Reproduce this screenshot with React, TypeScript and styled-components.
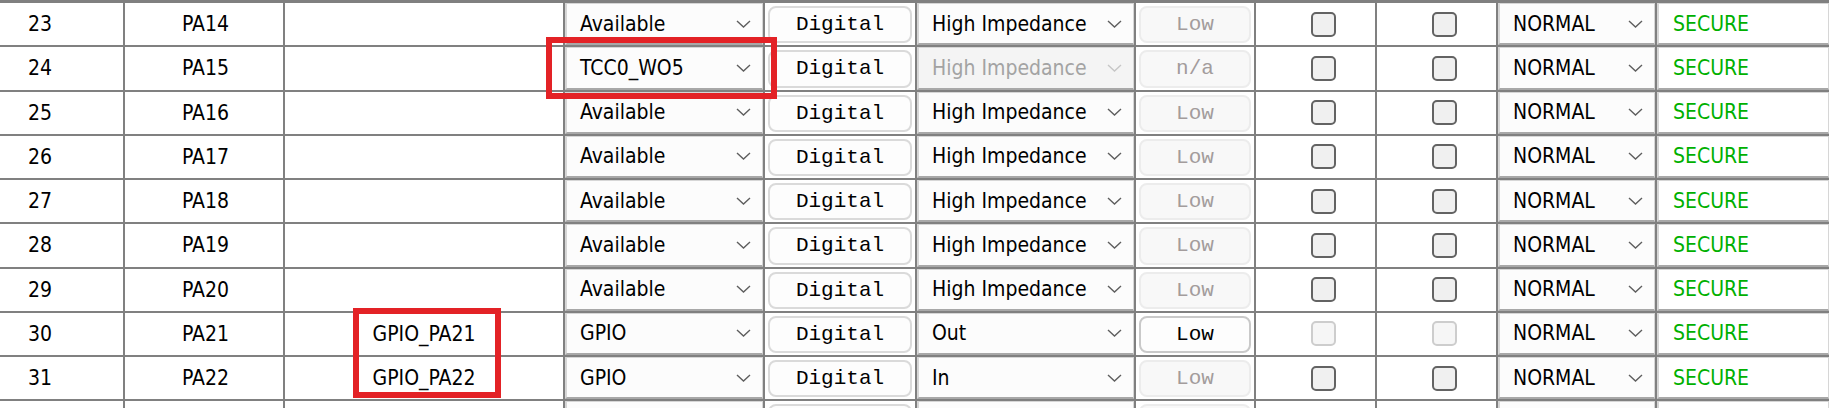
import React from 'react'
import styled, { createGlobalStyle } from 'styled-components'

const GlobalStyle = createGlobalStyle`
  html, body {
    margin: 0;
    padding: 0;
    background: #fff;
  }
  body {
    font-family: 'DejaVu Sans Condensed', 'DejaVu Sans', sans-serif;
    font-stretch: condensed;
    font-size: 21px;
    color: #000;
    overflow: hidden;
  }
`

// column widths include the 2px grid line on the right edge
const COLUMNS = [125, 160, 280, 200, 152, 219, 120, 121, 121, 159, 172]

const GRID = '#808080'

interface PinRow {
  index: number
  pin: string
  name?: string
  func: string
  direction: string
  directionDisabled?: boolean
  level: string
  levelEnabled?: boolean
  checksDisabled?: boolean
}

const pins: PinRow[] = [
  { index: 23, pin: 'PA14', func: 'Available', direction: 'High Impedance', level: 'Low' },
  {
    index: 24,
    pin: 'PA15',
    func: 'TCC0_WO5',
    direction: 'High Impedance',
    directionDisabled: true,
    level: 'n/a',
  },
  { index: 25, pin: 'PA16', func: 'Available', direction: 'High Impedance', level: 'Low' },
  { index: 26, pin: 'PA17', func: 'Available', direction: 'High Impedance', level: 'Low' },
  { index: 27, pin: 'PA18', func: 'Available', direction: 'High Impedance', level: 'Low' },
  { index: 28, pin: 'PA19', func: 'Available', direction: 'High Impedance', level: 'Low' },
  { index: 29, pin: 'PA20', func: 'Available', direction: 'High Impedance', level: 'Low' },
  {
    index: 30,
    pin: 'PA21',
    name: 'GPIO_PA21',
    func: 'GPIO',
    direction: 'Out',
    level: 'Low',
    levelEnabled: true,
    checksDisabled: true,
  },
  { index: 31, pin: 'PA22', name: 'GPIO_PA22', func: 'GPIO', direction: 'In', level: 'Low' },
]

const Sheet = styled.div`
  position: relative;
  width: 1836px;
  height: 408px;
  overflow: hidden;
`

const Table = styled.div`
  width: 1829px;
  border-top: 3px solid ${GRID};
`

const Row = styled.div`
  display: grid;
  grid-template-columns: ${COLUMNS.map((w) => `${w}px`).join(' ')};
  height: 44.25px;
  box-sizing: border-box;
  border-bottom: 2px solid ${GRID};
`

const Cell = styled.div<{ $pad?: number; $center?: boolean; $last?: boolean }>`
  display: flex;
  align-items: center;
  justify-content: ${(p) => (p.$center ? 'center' : 'flex-start')};
  padding-left: ${(p) => p.$pad ?? 0}px;
  border-right: ${(p) => (p.$last ? 'none' : `2px solid ${GRID}`)};
  box-sizing: border-box;
  min-width: 0;
  white-space: nowrap;
`

const FieldCell = styled.div<{ $last?: boolean }>`
  display: flex;
  border-right: ${(p) => (p.$last ? 'none' : `2px solid ${GRID}`)};
  box-sizing: border-box;
  min-width: 0;
`

const ButtonCell = styled.div`
  display: flex;
  padding: 3px 3px 2px 3px;
  border-right: 2px solid ${GRID};
  box-sizing: border-box;
  min-width: 0;
`

const Combo = styled.div<{ $disabled?: boolean }>`
  flex: 1;
  display: flex;
  align-items: center;
  justify-content: space-between;
  padding: 0 11px 0 13px;
  box-sizing: border-box;
  background: ${(p) => (p.$disabled ? '#f4f4f4' : '#fcfcfc')};
  border: 1px solid #d6d6d6;
  border-left-width: 2px;
  border-bottom: 2px solid #a8a8a8;
  color: ${(p) => (p.$disabled ? '#a3a3a3' : '#000')};
  white-space: nowrap;
`

const SecureField = styled(Combo)`
  background: #fff;
  padding-left: 14px;
  color: #00b000;
`

const PushButton = styled.div<{ $enabled?: boolean; $muted?: boolean }>`
  flex: 1;
  display: flex;
  align-items: center;
  justify-content: center;
  border-radius: 8px;
  border: 2px solid ${(p) => (p.$muted ? '#ececec' : p.$enabled ? '#c9c9c9' : '#dadada')};
  background: ${(p) => (p.$muted ? '#f8f8f8' : '#fdfdfd')};
  color: ${(p) => (p.$muted ? '#a39c9c' : '#000')};
  font-family: 'Liberation Mono', monospace;
  font-size: 21px;
`

const CheckBox = styled.div<{ $disabled?: boolean }>`
  width: 25px;
  height: 25px;
  box-sizing: border-box;
  border-radius: 5px;
  border: 2px solid ${(p) => (p.$disabled ? '#cdcdcd' : '#636363')};
  background: ${(p) => (p.$disabled ? '#f6f6f6' : '#f0f0f0')};
`

const Marker = styled.div<{ $x: number; $y: number; $w: number; $h: number }>`
  position: absolute;
  left: ${(p) => p.$x}px;
  top: ${(p) => p.$y}px;
  width: ${(p) => p.$w}px;
  height: ${(p) => p.$h}px;
  box-sizing: border-box;
  border: 6px solid #e32226;
  pointer-events: none;
`

function Chevron({ disabled }: { disabled?: boolean }) {
  return (
    <svg width='15' height='8' viewBox='0 0 15 8'>
      <path
        d='M1 1l6.5 6L14 1'
        fill='none'
        stroke={disabled ? '#c6c6c6' : '#5e5e5e'}
        strokeWidth='1.4'
      />
    </svg>
  )
}

function Select({ value, disabled }: { value?: string; disabled?: boolean }) {
  return (
    <FieldCell>
      <Combo $disabled={disabled}>
        <span>{value}</span>
        {value ? <Chevron disabled={disabled} /> : null}
      </Combo>
    </FieldCell>
  )
}

function PinLine({ row }: { row: PinRow }) {
  return (
    <Row>
      <Cell $pad={28}>{row.index}</Cell>
      <Cell $pad={57}>{row.pin}</Cell>
      <Cell $center>{row.name}</Cell>
      <Select value={row.func} />
      <ButtonCell>
        <PushButton>Digital</PushButton>
      </ButtonCell>
      <Select value={row.direction} disabled={row.directionDisabled} />
      <ButtonCell>
        <PushButton $enabled={row.levelEnabled} $muted={!row.levelEnabled}>
          {row.level}
        </PushButton>
      </ButtonCell>
      <Cell $pad={55}>
        <CheckBox $disabled={row.checksDisabled} />
      </Cell>
      <Cell $pad={55}>
        <CheckBox $disabled={row.checksDisabled} />
      </Cell>
      <Select value='NORMAL' />
      <FieldCell $last>
        <SecureField>SECURE</SecureField>
      </FieldCell>
    </Row>
  )
}

// the next row only peeks in at the bottom edge, so just its controls' frames are drawn
function TrailingRow() {
  return (
    <Row>
      <Cell />
      <Cell />
      <Cell />
      <Select />
      <ButtonCell>
        <PushButton />
      </ButtonCell>
      <Select />
      <ButtonCell>
        <PushButton $muted />
      </ButtonCell>
      <Cell />
      <Cell />
      <Select />
      <FieldCell $last>
        <SecureField />
      </FieldCell>
    </Row>
  )
}

export default function App() {
  return (
    <>
      <GlobalStyle />
      <Sheet>
        <Table>
          {pins.map((row) => (
            <PinLine key={row.index} row={row} />
          ))}
          <TrailingRow />
        </Table>
        <Marker $x={546} $y={37} $w={231} $h={62} />
        <Marker $x={353} $y={308} $w={148} $h={90} />
      </Sheet>
    </>
  )
}
